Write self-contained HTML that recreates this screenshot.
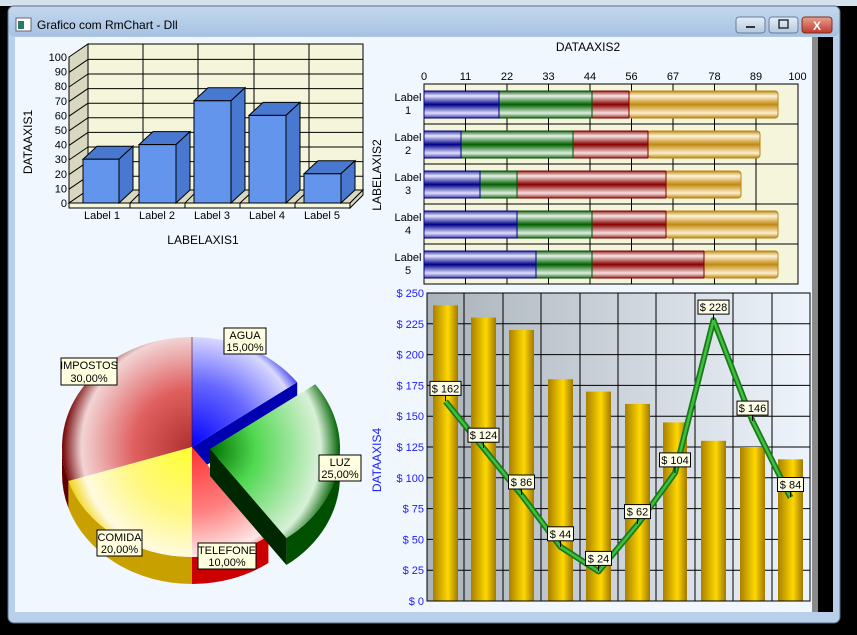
<!DOCTYPE html>
<html><head><meta charset="utf-8"><style>
html,body{margin:0;padding:0;background:#000;}
svg{display:block;font-family:"Liberation Sans",sans-serif;}
</style></head><body>
<svg width="857" height="635" viewBox="0 0 857 635" xmlns="http://www.w3.org/2000/svg">
<defs>
<linearGradient id="tb" x1="0" y1="0" x2="0" y2="1"><stop offset="0" stop-color="#c4d8ee"/><stop offset="1" stop-color="#a6c2e2"/></linearGradient>
<linearGradient id="cls" x1="0" y1="0" x2="0" y2="1"><stop offset="0" stop-color="#e8a090"/><stop offset="1" stop-color="#c0392b"/></linearGradient>
<linearGradient id="btn" x1="0" y1="0" x2="0" y2="1"><stop offset="0" stop-color="#e4eef8"/><stop offset="1" stop-color="#b4c8e0"/></linearGradient>
<linearGradient id="gb" x1="0" y1="0" x2="0" y2="1"><stop offset="0" stop-color="#3030a0"/><stop offset=".18" stop-color="#e8e8ff"/><stop offset=".5" stop-color="#000088"/><stop offset=".82" stop-color="#e0e0ff"/><stop offset="1" stop-color="#4040b0"/></linearGradient>
<linearGradient id="gg" x1="0" y1="0" x2="0" y2="1"><stop offset="0" stop-color="#206020"/><stop offset=".18" stop-color="#e8f4e8"/><stop offset=".5" stop-color="#006000"/><stop offset=".82" stop-color="#e0f0e0"/><stop offset="1" stop-color="#307030"/></linearGradient>
<linearGradient id="gr" x1="0" y1="0" x2="0" y2="1"><stop offset="0" stop-color="#902020"/><stop offset=".18" stop-color="#fae8e8"/><stop offset=".5" stop-color="#880000"/><stop offset=".82" stop-color="#f8e0e0"/><stop offset="1" stop-color="#a03030"/></linearGradient>
<linearGradient id="go" x1="0" y1="0" x2="0" y2="1"><stop offset="0" stop-color="#c08a10"/><stop offset=".18" stop-color="#fff4dc"/><stop offset=".5" stop-color="#c08a10"/><stop offset=".82" stop-color="#fff0d0"/><stop offset="1" stop-color="#c08a10"/></linearGradient>
<linearGradient id="bg4" x1="0" y1="0" x2="1" y2="0"><stop offset="0" stop-color="#aab2ba"/><stop offset="1" stop-color="#eef4fb"/></linearGradient>
<linearGradient id="gold" x1="0" y1="0" x2="1" y2="0"><stop offset="0" stop-color="#a88000"/><stop offset=".6" stop-color="#ffd800"/><stop offset="1" stop-color="#a07800"/></linearGradient>
<radialGradient id="pA" cx="192" cy="447" r="130" gradientUnits="userSpaceOnUse"><stop offset="0" stop-color="#0000ff"/><stop offset=".5" stop-color="#6868ff"/><stop offset=".85" stop-color="#d8d8ff"/><stop offset="1" stop-color="#0000e0"/></radialGradient>
<radialGradient id="pL" cx="210" cy="449" r="130" gradientUnits="userSpaceOnUse"><stop offset="0" stop-color="#007000"/><stop offset=".35" stop-color="#50d850"/><stop offset=".85" stop-color="#d8f0d8"/><stop offset="1" stop-color="#006000"/></radialGradient>
<radialGradient id="pT" cx="192" cy="447" r="130" gradientUnits="userSpaceOnUse"><stop offset="0" stop-color="#ff3030"/><stop offset=".5" stop-color="#ff8080"/><stop offset=".85" stop-color="#ffe8e8"/><stop offset="1" stop-color="#d00000"/></radialGradient>
<radialGradient id="pC" cx="192" cy="447" r="130" gradientUnits="userSpaceOnUse"><stop offset="0" stop-color="#ffff30"/><stop offset=".5" stop-color="#fff880"/><stop offset=".85" stop-color="#fffae0"/><stop offset="1" stop-color="#f0d000"/></radialGradient>
<radialGradient id="pI" cx="192" cy="447" r="130" gradientUnits="userSpaceOnUse"><stop offset="0" stop-color="#b03030"/><stop offset=".45" stop-color="#e06060"/><stop offset=".85" stop-color="#f2d4d4"/><stop offset="1" stop-color="#700000"/></radialGradient>
</defs>
<!-- desktop -->
<rect x="0" y="0" width="857" height="6" fill="#d4e0ec"/>
<!-- window frame -->
<rect x="8" y="6" width="832" height="617" rx="6" fill="#b8d0ea" stroke="#5a6e88"/>
<rect x="8.5" y="6.5" width="831" height="30" rx="6" fill="url(#tb)"/>
<rect x="16" y="18" width="15" height="13" fill="#fff" stroke="#667"/><rect x="18" y="21" width="6" height="8" fill="#2a7a6a"/>
<text x="37" y="29" font-size="12" fill="#000">Grafico com RmChart - Dll</text>
<rect x="736" y="17" width="29" height="16" rx="3" fill="url(#btn)" stroke="#6a7d98"/><rect x="746" y="26" width="9" height="2" fill="#333"/>
<rect x="769" y="17" width="29" height="16" rx="3" fill="url(#btn)" stroke="#6a7d98"/><rect x="779" y="20" width="9" height="8" fill="none" stroke="#333" stroke-width="1.5"/>
<rect x="802" y="17" width="30" height="16" rx="3" fill="url(#cls)" stroke="#7a3020"/><text x="817" y="30" font-size="12" font-weight="bold" fill="#fff" text-anchor="middle">X</text>
<!-- client -->
<rect x="15" y="37" width="797" height="575" fill="#f0f7ff"/>
<rect x="812" y="37" width="6" height="575" fill="#8a8a8a"/>
<rect x="818" y="37" width="15" height="575" fill="#000"/>

<!-- ===== Chart 1: 3D bars ===== -->
<polygon points="69,57 88,44 88,190 69,203" fill="#d8d8c0" stroke="#000"/>
<rect x="88" y="44" width="275" height="146" fill="#f5f5dc" stroke="#000"/>
<polygon points="69,203 88,190 363,190 350,203" fill="#d8d8c0" stroke="#000"/>
<rect x="69" y="203" width="281" height="5" fill="#f5f5dc" stroke="#000"/>
<polygon points="350,203 363,190 363,195 350,208" fill="#d8d8c0" stroke="#000"/>
<g stroke="#000" stroke-width="1">
<line x1="88" y1="59.4" x2="363" y2="59.4"/><line x1="88" y1="74" x2="363" y2="74"/><line x1="88" y1="88.6" x2="363" y2="88.6"/><line x1="88" y1="103.2" x2="363" y2="103.2"/><line x1="88" y1="117.8" x2="363" y2="117.8"/><line x1="88" y1="132.4" x2="363" y2="132.4"/><line x1="88" y1="147" x2="363" y2="147"/><line x1="88" y1="161.6" x2="363" y2="161.6"/><line x1="88" y1="176.2" x2="363" y2="176.2"/>
<line x1="69" y1="72.4" x2="88" y2="59.4"/><line x1="69" y1="87" x2="88" y2="74"/><line x1="69" y1="101.6" x2="88" y2="88.6"/><line x1="69" y1="116.2" x2="88" y2="103.2"/><line x1="69" y1="130.8" x2="88" y2="117.8"/><line x1="69" y1="145.4" x2="88" y2="132.4"/><line x1="69" y1="160" x2="88" y2="147"/><line x1="69" y1="174.6" x2="88" y2="161.6"/><line x1="69" y1="189.2" x2="88" y2="176.2"/>
<line x1="143" y1="44" x2="143" y2="190"/><line x1="198" y1="44" x2="198" y2="190"/><line x1="254" y1="44" x2="254" y2="190"/><line x1="309" y1="44" x2="309" y2="190"/>
<line x1="130" y1="203" x2="130" y2="208"/><line x1="185" y1="203" x2="185" y2="208"/><line x1="240" y1="203" x2="240" y2="208"/><line x1="295" y1="203" x2="295" y2="208"/>
<line x1="130" y1="203" x2="143" y2="190"/><line x1="185" y1="203" x2="198" y2="190"/><line x1="240" y1="203" x2="254" y2="190"/><line x1="295" y1="203" x2="309" y2="190"/>
</g>
<g stroke="#000" stroke-width="1">
<polygon points="83,159.2 97,146.2 133,146.2 119,159.2" fill="#4878cf"/><polygon points="119,159.2 133,146.2 133,190 119,203" fill="#4878cf"/><rect x="83" y="159.2" width="36" height="43.8" fill="#6495ed"/>
<polygon points="139,144.6 153,131.6 190,131.6 176,144.6" fill="#4878cf"/><polygon points="176,144.6 190,131.6 190,190 176,203" fill="#4878cf"/><rect x="139" y="144.6" width="37" height="58.4" fill="#6495ed"/>
<polygon points="194,100.8 208,87.8 245,87.8 231,100.8" fill="#4878cf"/><polygon points="231,100.8 245,87.8 245,190 231,203" fill="#4878cf"/><rect x="194" y="100.8" width="37" height="102.2" fill="#6495ed"/>
<polygon points="249,115.4 263,102.4 300,102.4 286,115.4" fill="#4878cf"/><polygon points="286,115.4 300,102.4 300,190 286,203" fill="#4878cf"/><rect x="249" y="115.4" width="37" height="87.6" fill="#6495ed"/>
<polygon points="304,173.8 318,160.8 355,160.8 341,173.8" fill="#4878cf"/><polygon points="341,173.8 355,160.8 355,190 341,203" fill="#4878cf"/><rect x="304" y="173.8" width="37" height="29.2" fill="#6495ed"/>
</g>
<g font-size="11" fill="#000" text-anchor="end">
<text x="67" y="61">100</text><text x="67" y="75.6">90</text><text x="67" y="90.2">80</text><text x="67" y="104.8">70</text><text x="67" y="119.4">60</text><text x="67" y="134">50</text><text x="67" y="148.6">40</text><text x="67" y="163.2">30</text><text x="67" y="177.8">20</text><text x="67" y="192.4">10</text><text x="67" y="207">0</text>
</g>
<g font-size="11" fill="#000" text-anchor="middle">
<text x="102" y="219">Label 1</text><text x="157" y="219">Label 2</text><text x="212" y="219">Label 3</text><text x="267" y="219">Label 4</text><text x="322" y="219">Label 5</text>
<text x="203" y="244" font-size="12">LABELAXIS1</text>
<text transform="translate(32,142) rotate(-90)" font-size="12">DATAAXIS1</text>
</g>

<!-- ===== Chart 2: stacked horizontal ===== -->
<text x="588" y="51" font-size="12" text-anchor="middle">DATAAXIS2</text>
<g font-size="11" text-anchor="middle">
<text x="424" y="80">0</text><text x="465.5" y="80">11</text><text x="507" y="80">22</text><text x="548.5" y="80">33</text><text x="590" y="80">44</text><text x="631.5" y="80">56</text><text x="673" y="80">67</text><text x="714.5" y="80">78</text><text x="756" y="80">89</text><text x="797.5" y="80">100</text>
</g>
<rect x="424" y="84" width="374" height="200" fill="#f5f5dc" stroke="#000"/>
<g stroke="#000">
<line x1="465.5" y1="84" x2="465.5" y2="284"/><line x1="507" y1="84" x2="507" y2="284"/><line x1="548.5" y1="84" x2="548.5" y2="284"/><line x1="590" y1="84" x2="590" y2="284"/><line x1="631.5" y1="84" x2="631.5" y2="284"/><line x1="673" y1="84" x2="673" y2="284"/><line x1="714.5" y1="84" x2="714.5" y2="284"/><line x1="756" y1="84" x2="756" y2="284"/>
<line x1="424" y1="124" x2="798" y2="124"/><line x1="424" y1="164" x2="798" y2="164"/><line x1="424" y1="204" x2="798" y2="204"/><line x1="424" y1="244" x2="798" y2="244"/>
</g>
<g stroke-width="1">
<rect x="629" y="91" width="149" height="27" rx="3" fill="url(#go)" stroke="#b8860b"/><rect x="592" y="91" width="37" height="27" fill="url(#gr)" stroke="#800000"/><rect x="499" y="91" width="93" height="27" fill="url(#gg)" stroke="#005000"/><rect x="424" y="91" width="75" height="27" fill="url(#gb)" stroke="#000080"/>
<rect x="648" y="131" width="112" height="27" rx="3" fill="url(#go)" stroke="#b8860b"/><rect x="573" y="131" width="75" height="27" fill="url(#gr)" stroke="#800000"/><rect x="461" y="131" width="112" height="27" fill="url(#gg)" stroke="#005000"/><rect x="424" y="131" width="37" height="27" fill="url(#gb)" stroke="#000080"/>
<rect x="666" y="171" width="75" height="27" rx="3" fill="url(#go)" stroke="#b8860b"/><rect x="517" y="171" width="149" height="27" fill="url(#gr)" stroke="#800000"/><rect x="480" y="171" width="37" height="27" fill="url(#gg)" stroke="#005000"/><rect x="424" y="171" width="56" height="27" fill="url(#gb)" stroke="#000080"/>
<rect x="666" y="211" width="112" height="27" rx="3" fill="url(#go)" stroke="#b8860b"/><rect x="592" y="211" width="74" height="27" fill="url(#gr)" stroke="#800000"/><rect x="517" y="211" width="75" height="27" fill="url(#gg)" stroke="#005000"/><rect x="424" y="211" width="93" height="27" fill="url(#gb)" stroke="#000080"/>
<rect x="704" y="251" width="74" height="27" rx="3" fill="url(#go)" stroke="#b8860b"/><rect x="592" y="251" width="112" height="27" fill="url(#gr)" stroke="#800000"/><rect x="536" y="251" width="56" height="27" fill="url(#gg)" stroke="#005000"/><rect x="424" y="251" width="112" height="27" fill="url(#gb)" stroke="#000080"/>
</g>
<g font-size="11" text-anchor="middle">
<text x="408" y="101">Label</text><text x="408" y="114">1</text>
<text x="408" y="141">Label</text><text x="408" y="154">2</text>
<text x="408" y="181">Label</text><text x="408" y="194">3</text>
<text x="408" y="221">Label</text><text x="408" y="234">4</text>
<text x="408" y="261">Label</text><text x="408" y="274">5</text>
<text transform="translate(381,175) rotate(-90)" font-size="12">LABELAXIS2</text>
</g>

<!-- ===== Chart 4: bars + line ===== -->
<rect x="427" y="293" width="383" height="308" fill="url(#bg4)"/>
<g stroke="#000">
<line x1="427" y1="323.8" x2="810" y2="323.8"/><line x1="427" y1="354.6" x2="810" y2="354.6"/><line x1="427" y1="385.4" x2="810" y2="385.4"/><line x1="427" y1="416.2" x2="810" y2="416.2"/><line x1="427" y1="447" x2="810" y2="447"/><line x1="427" y1="477.8" x2="810" y2="477.8"/><line x1="427" y1="508.6" x2="810" y2="508.6"/><line x1="427" y1="539.4" x2="810" y2="539.4"/><line x1="427" y1="570.2" x2="810" y2="570.2"/>
<line x1="464" y1="293" x2="464" y2="601"/><line x1="503" y1="293" x2="503" y2="601"/><line x1="541" y1="293" x2="541" y2="601"/><line x1="580" y1="293" x2="580" y2="601"/><line x1="618" y1="293" x2="618" y2="601"/><line x1="656" y1="293" x2="656" y2="601"/><line x1="695" y1="293" x2="695" y2="601"/><line x1="733" y1="293" x2="733" y2="601"/><line x1="772" y1="293" x2="772" y2="601"/>
</g>
<g fill="url(#gold)">
<rect x="433" y="305.3" width="25" height="295.7"/><rect x="471" y="317.6" width="25" height="283.4"/><rect x="509" y="330" width="25" height="271"/><rect x="548" y="379.2" width="25" height="221.8"/><rect x="586" y="391.6" width="25" height="209.4"/><rect x="625" y="403.9" width="25" height="197.1"/><rect x="663" y="422.4" width="24" height="178.6"/><rect x="701" y="440.8" width="25" height="160.2"/><rect x="740" y="447" width="25" height="154"/><rect x="778" y="459.3" width="25" height="141.7"/>
</g>
<rect x="427" y="293" width="383" height="308" fill="none" stroke="#000"/>
<polyline points="445.5,401.4 483.5,448.2 521.5,495 560.5,546.8 598.5,571.4 637.5,524.6 675,472.9 713.5,320.1 752.5,421.1 790.5,497.5" fill="none" stroke="#1a7a1a" stroke-width="6" stroke-linejoin="round"/>
<polyline points="445.5,401.4 483.5,448.2 521.5,495 560.5,546.8 598.5,571.4 637.5,524.6 675,472.9 713.5,320.1 752.5,421.1 790.5,497.5" fill="none" stroke="#40c040" stroke-width="2.5" stroke-linejoin="round"/>
<g stroke="#000" stroke-width="1">
<line x1="445.5" y1="395" x2="445.5" y2="401"/><line x1="483.5" y1="442" x2="483.5" y2="448"/><line x1="521.5" y1="489" x2="521.5" y2="495"/><line x1="560.5" y1="541" x2="560.5" y2="547"/><line x1="598.5" y1="565" x2="598.5" y2="571"/><line x1="637.5" y1="518" x2="637.5" y2="524"/><line x1="675" y1="467" x2="675" y2="473"/><line x1="713.5" y1="314" x2="713.5" y2="320"/><line x1="752.5" y1="415" x2="752.5" y2="421"/><line x1="790.5" y1="491" x2="790.5" y2="497"/>
</g>
<g fill="#ffffe8" stroke="#000">
<rect x="430" y="381.4" width="31" height="14"/><rect x="468" y="428.2" width="31" height="14"/><rect x="508.5" y="475" width="26" height="14"/><rect x="547.5" y="526.8" width="26" height="14"/><rect x="585.5" y="551.4" width="26" height="14"/><rect x="624.5" y="504.6" width="26" height="14"/><rect x="659.5" y="452.9" width="31" height="14"/><rect x="698" y="300.1" width="31" height="14"/><rect x="737" y="401.1" width="31" height="14"/><rect x="777.5" y="477.5" width="26" height="14"/>
</g>
<g font-size="11" text-anchor="middle" fill="#000">
<text x="445.5" y="392.4">$ 162</text><text x="483.5" y="439.2">$ 124</text><text x="521.5" y="486">$ 86</text><text x="560.5" y="537.8">$ 44</text><text x="598.5" y="562.4">$ 24</text><text x="637.5" y="515.6">$ 62</text><text x="675" y="463.9">$ 104</text><text x="713.5" y="311.1">$ 228</text><text x="752.5" y="412.1">$ 146</text><text x="790.5" y="488.5">$ 84</text>
</g>
<g font-size="11" text-anchor="end" fill="#2020ff">
<text x="424" y="297">$ 250</text><text x="424" y="327.8">$ 225</text><text x="424" y="358.6">$ 200</text><text x="424" y="389.4">$ 175</text><text x="424" y="420.2">$ 150</text><text x="424" y="451">$ 125</text><text x="424" y="481.8">$ 100</text><text x="424" y="512.6">$ 75</text><text x="424" y="543.4">$ 50</text><text x="424" y="574.2">$ 25</text><text x="424" y="605">$ 0</text>
<text transform="translate(381,460) rotate(-90)" font-size="12" text-anchor="middle">DATAAXIS4</text>
</g>

<!-- ===== Pie ===== -->
<polygon points="192,447 297.2,382.3 297.2,409 192,474" fill="#0000b0"/>
<path d="M192 447 L192 337 A130 110 0 0 1 297.2 382.3 Z" fill="url(#pA)"/>
<path d="M268.4 536 A130 110 0 0 1 192 557 L192 584 A130 110 0 0 0 268.4 563 Z" fill="#cc0000"/>
<path d="M192 557 A130 110 0 0 1 68.4 481 L68.4 508 A130 110 0 0 0 192 584 Z" fill="#c8a000"/>
<path d="M68.4 481 A130 110 0 0 1 62 447 L62 474 A130 110 0 0 0 68.4 508 Z" fill="#600000"/>
<path d="M192 447 L268.4 536 A130 110 0 0 1 192 557 Z" fill="url(#pT)"/>
<path d="M192 447 L192 557 A130 110 0 0 1 68.4 481 Z" fill="url(#pC)"/>
<path d="M192 447 L68.4 481 A130 110 0 0 1 192 337 Z" fill="url(#pI)"/>
<line x1="192" y1="337" x2="192" y2="447" stroke="#600" stroke-width=".6"/>
<path d="M340 449 A130 110 0 0 1 286.4 538 L286.4 565 A130 110 0 0 0 340 476 Z" fill="#005000"/>
<polygon points="210,449 286.4,538 286.4,565 210,476" fill="#002800"/>
<path d="M210 449 L315.2 384.3 A130 110 0 0 1 286.4 538 Z" fill="url(#pL)"/>
<g fill="#ffffe0" stroke="#000">
<rect x="224" y="328" width="42" height="26"/><rect x="61" y="358" width="56" height="27"/><rect x="319" y="455" width="42" height="26"/><rect x="97" y="530" width="45" height="26"/><rect x="198" y="543" width="58" height="26"/>
</g>
<g font-size="11" text-anchor="middle" fill="#000">
<text x="245" y="339">AGUA</text><text x="245" y="351">15,00%</text>
<text x="89" y="369">IMPOSTOS</text><text x="89" y="382">30,00%</text>
<text x="340" y="466">LUZ</text><text x="340" y="478">25,00%</text>
<text x="119.5" y="541">COMIDA</text><text x="119.5" y="553">20,00%</text>
<text x="227" y="554">TELEFONE</text><text x="227" y="566">10,00%</text>
</g>
</svg>
</body></html>
